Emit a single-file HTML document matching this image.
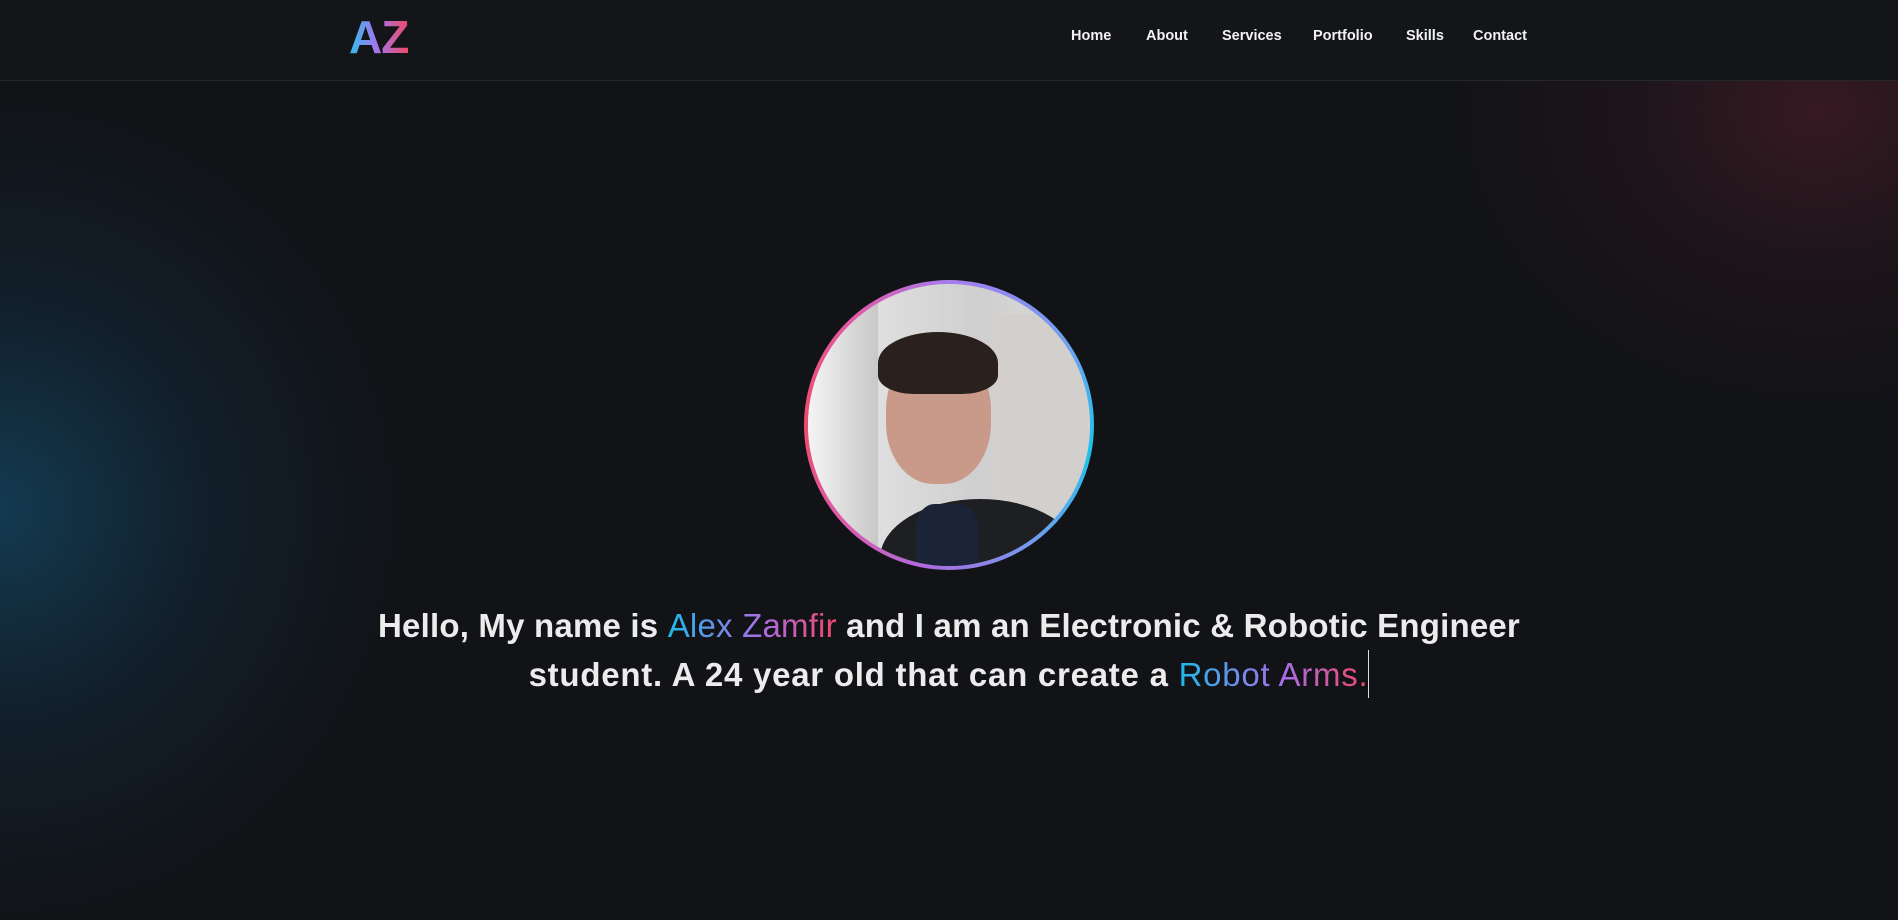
<!DOCTYPE html>
<html><head><meta charset="utf-8"><style>
*{margin:0;padding:0;box-sizing:border-box}
html,body{width:1898px;height:919px;overflow:hidden;background:#111317;font-family:"Liberation Sans",sans-serif}
.glow1{position:absolute;left:-400px;top:100px;width:800px;height:820px;border-radius:50%;background:radial-gradient(closest-side,rgba(20,75,105,.7),rgba(20,55,80,.35) 50%,rgba(17,19,23,0));}
.glow2{position:absolute;right:-300px;top:-200px;width:760px;height:620px;border-radius:50%;background:radial-gradient(closest-side,rgba(80,30,42,.6),rgba(55,25,33,.3) 50%,rgba(17,19,23,0));}
header{position:absolute;left:0;top:0;width:1898px;height:81px;background:#131519;border-bottom:1px solid #24272c;z-index:2}
.logo{position:absolute;left:349px;top:10px;font-size:46px;font-weight:bold;background:linear-gradient(90deg,#2ec0ea,#a078ee 45%,#ee4a6a);-webkit-background-clip:text;background-clip:text;color:transparent;letter-spacing:-1px}
nav a{position:absolute;top:28px;color:#f2f2f2;font-size:14.5px;font-weight:bold;text-decoration:none}
.ring{position:absolute;left:804px;top:280px;width:290px;height:290px;border-radius:50%;background:conic-gradient(from 0deg,#a67cef,#6aa4f0 60deg,#1dc2ea 100deg,#6aa0f0 140deg,#b06ae0 190deg,#e05aa8 230deg,#f04a6a 270deg,#e05aa8 320deg,#a67cef);padding:4px}
.photo{width:100%;height:100%;border-radius:50%;overflow:hidden;position:relative;background:linear-gradient(90deg,#eaeaea,#d8d8d8 40%,#cfcfcf 60%,#dcdcdc)}
.photo div{position:absolute}
.text{position:absolute;left:0;width:1898px;top:602px;text-align:center;color:#ececec;font-size:33px;font-weight:bold;line-height:48px;letter-spacing:.2px}
.l2{letter-spacing:.75px}
.g{background:linear-gradient(90deg,#1fb8ea,#a86ee8 55%,#f04868);-webkit-background-clip:text;background-clip:text;color:transparent;font-weight:normal}
.cur{display:inline-block;width:1px;height:48px;background:#ddd;vertical-align:-12px}
</style></head><body>
<div class="glow1"></div><div class="glow2"></div>
<header>
<div class="logo">AZ</div>
<nav><a style="left:1071px">Home</a><a style="left:1146px">About</a><a style="left:1222px">Services</a><a style="left:1313px">Portfolio</a><a style="left:1406px">Skills</a><a style="left:1473px">Contact</a></nav>
</header>
<div class="ring"><div class="photo">
<div style="left:0;top:0;width:70px;height:282px;background:linear-gradient(90deg,#f4f4f4,#c8c8c8)"></div>
<div style="left:190px;top:30px;width:100px;height:220px;background:#d2cfcc"></div>
<div style="left:72px;top:215px;width:200px;height:120px;border-radius:50% 50% 0 0;background:#1e1f22"></div>
<div style="left:108px;top:220px;width:62px;height:80px;background:#1b2336;border-radius:30% 30% 0 0"></div>
<div style="left:78px;top:65px;width:105px;height:135px;border-radius:45%;background:#c9998a"></div>
<div style="left:70px;top:48px;width:120px;height:62px;border-radius:50% 50% 30% 30%;background:#2b211c"></div>
</div></div>
<div class="text">Hello, My name is <span class="g">Alex Zamfir</span> and I am an Electronic &amp; Robotic Engineer<br><span class="l2">student. A 24 year old that can create a <span class="g">Robot Arms.</span></span><span class="cur"></span></div>
</body></html>
